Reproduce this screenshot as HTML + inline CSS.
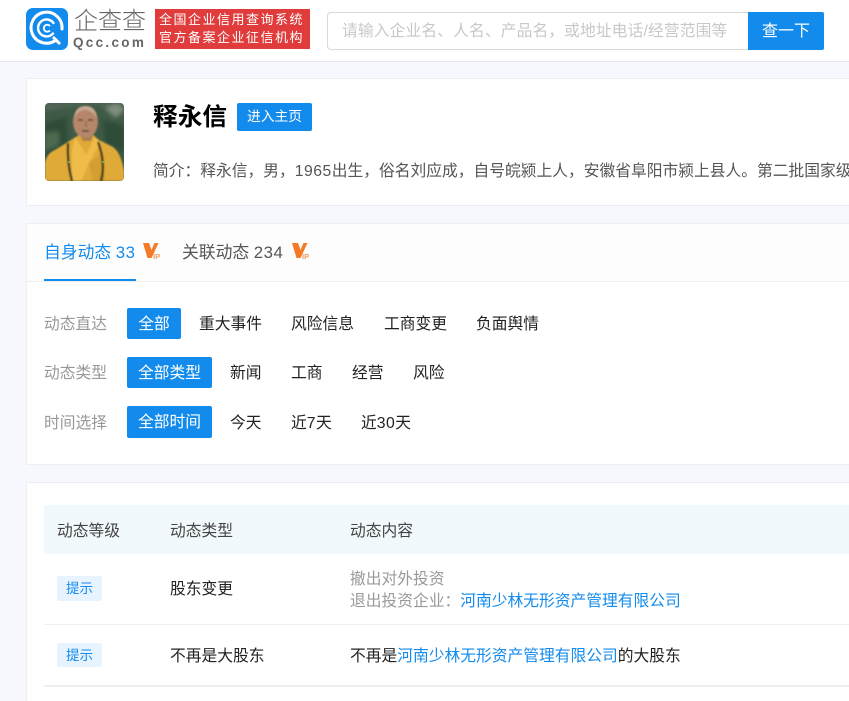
<!DOCTYPE html>
<html lang="zh-CN"><head><meta charset="utf-8"><title>释永信</title>
<style>
*{box-sizing:border-box;margin:0;padding:0}
html,body{width:849px;height:701px;overflow:hidden;background:#f6f8fd}
body{position:relative;font-family:"Liberation Sans","Noto Sans CJK SC",sans-serif;font-size:15.75px;color:#222}
.a{position:absolute;white-space:nowrap;line-height:22px}
.card{position:absolute;left:26px;width:823px;background:#fff;border:1px solid #eee;border-right:0}
.btn{position:absolute;background:#128bed;color:#fff;border-radius:2px;text-align:center;white-space:nowrap}
.g{color:#999}.b{color:#128bed}.k{color:#222}.d{color:#555}
.n{letter-spacing:.5px}
.tip{position:absolute;left:57px;width:45px;background:#e7f3ff;color:#128bed;font-size:13.5px;border-radius:2px;text-align:center}
</style></head><body>
<div style="position:absolute;left:0;top:0;width:849px;height:62px;background:#fff;border-bottom:1px solid #e6e7ee"></div>
<svg style="position:absolute;left:26px;top:8px" width="42" height="42" viewBox="0 0 42 42"><rect width="42" height="42" rx="7" fill="#128bed"/><path d="M30 32A15.500 15.500 0 1 1 36 21" fill="none" stroke="#fff" stroke-width="3" stroke-linecap="round"/><path d="M27 25.500A8.500 8.500 0 1 1 27.500 15" fill="none" stroke="#fff" stroke-width="2.400" stroke-linecap="round"/><path d="M24 22.500A3.500 3.500 0 1 1 24 18" fill="none" stroke="#fff" stroke-width="1.800"/><path d="M27 29l7 7" stroke="#fff" stroke-width="3"/></svg>
<div class="a" style="left:74px;top:4px;font-size:24px;line-height:36px;color:#666;font-weight:300">企查查</div>
<div class="a" style="left:73px;top:35px;font-size:13.5px;line-height:16px;letter-spacing:2.300px;color:#666;font-weight:bold">Qcc.com</div>
<div style="position:absolute;left:155px;top:9px;width:155px;height:40px;background:#e03c3c;color:#fff;font-size:13px;line-height:18px;padding:2px 0 0 4px;letter-spacing:1.500px;white-space:nowrap">全国企业信用查询系统<br>官方备案企业征信机构</div>
<div style="position:absolute;left:327px;top:12px;width:422px;height:38px;background:#fff;border:1px solid #d9d9d9;border-radius:4px 0 0 4px"></div>
<div class="a" style="left:342px;top:21px;color:#c8c8c8;letter-spacing:.12px">请输入企业名、人名、产品名，或地址电话/经营范围等</div>
<div class="btn" style="left:748px;top:12px;width:76px;height:38px;line-height:39px;font-size:16px;border-radius:0 2px 2px 0">查一下</div>

<div class="card" style="top:78px;height:128px"></div>
<svg style="position:absolute;left:45px;top:103px" width="79" height="78" viewBox="0 0 79 78">
<defs><clipPath id="c"><rect width="79" height="78" rx="4"/></clipPath><filter id="bl"><feGaussianBlur stdDeviation="2"/></filter><filter id="bs"><feGaussianBlur stdDeviation=".7"/></filter></defs>
<g clip-path="url(#c)"><rect width="79" height="78" fill="#3f5a46"/>
<g filter="url(#bl)"><path d="M0 0h79v10L50 2 20 4 0 8z" fill="#54685a"/><path d="M0 20l22-6v26L0 54zM58 16l21 8v26L60 40z" fill="#2f4c38"/><path d="M60 6l12-6 7 7-8 8z" fill="#7f8e7f"/><path d="M0 30l14-2v14L0 48z" fill="#4c6a50"/></g>
<g filter="url(#bs)"><path d="M0 78V60Q2 50 10 47L26 37 37 30 46 30 54 37 68 44Q76 50 79 68V78z" fill="#e0aa38"/><path d="M30 34L41 52 50 34 55 40 44 60 36 78H27V48z" fill="#efbc48"/><path d="M48 78L44 60 58 50 60 78z" fill="#d39e30"/><path d="M23 40Q22 60 27 78M53 39Q61 60 56 78" fill="none" stroke="#40381f" stroke-width="2.400"/><path d="M31 26L38 38 46 38 50 26z" fill="#a9804e"/><ellipse cx="40.500" cy="19" rx="12.500" ry="16" fill="#b5866a"/><path d="M29 15Q30 3 40.500 3T52 15Q47 7 40 7T29 15z" fill="#c8a991"/><path d="M33 17h5M43 17h5M37 28h7" stroke="#5a3f31" stroke-width="1.400"/><path d="M41 18v6" stroke="#96694f" stroke-width="1.500"/></g>
<circle cx="24" cy="59" r="1" fill="#5ec27a"/><circle cx="58" cy="59" r="1" fill="#5ec27a"/></g></svg>

<div class="a" style="left:153px;top:102px;font-size:24.7px;line-height:32px;font-weight:bold;color:#000">释永信</div>
<div class="btn" style="left:237px;top:103px;width:75px;height:28px;line-height:27px;font-size:13.75px">进入主页</div>
<div class="a d" style="left:153px;top:161px;width:696px;overflow:hidden">简介：释永信，男，<span class="n">1965</span>出生，俗名刘应成，自号皖颍上人，安徽省阜阳市颍上县人。第二批国家级</div>

<div class="card" style="top:223px;height:242px"></div>
<div style="position:absolute;left:27px;top:281px;width:822px;height:1px;background:#eee"></div>
<div style="position:absolute;left:27px;top:224px;width:822px;height:57px;background:#fdfdfe"></div>
<div class="a b" style="left:44px;top:242px;font-size:16.8px">自身动态 <span class="n">33</span></div>
<div style="position:absolute;left:44px;top:279px;width:92px;height:2px;background:#128bed"></div>
<svg style="position:absolute;left:143px;top:243px" width="17" height="17" viewBox="0 0 17 17"><path d="M0 0h6l2.500 7 3-7h4L8.500 15H4.500z" fill="#f47a25"/><text x="10" y="16" font-size="7.5" font-weight="bold" fill="#f29a5e" font-family="Liberation Sans">IP</text></svg>
<div class="a d" style="left:182px;top:242px;font-size:16.8px">关联动态 <span class="n">234</span></div>
<svg style="position:absolute;left:292px;top:243px" width="17" height="17" viewBox="0 0 17 17"><path d="M0 0h6l2.500 7 3-7h4L8.500 15H4.500z" fill="#f47a25"/><text x="10" y="16" font-size="7.5" font-weight="bold" fill="#f29a5e" font-family="Liberation Sans">IP</text></svg>

<div class="a g" style="left:44px;top:314px">动态直达</div>
<div class="btn" style="left:127px;top:308px;width:54px;height:31px;line-height:33px">全部</div>
<div class="a k" style="left:199px;top:314px">重大事件</div>
<div class="a k" style="left:291px;top:314px">风险信息</div>
<div class="a k" style="left:384px;top:314px">工商变更</div>
<div class="a k" style="left:476px;top:314px">负面舆情</div>

<div class="a g" style="left:44px;top:363px">动态类型</div>
<div class="btn" style="left:127px;top:357px;width:85px;height:31px;line-height:33px">全部类型</div>
<div class="a k" style="left:230px;top:363px">新闻</div>
<div class="a k" style="left:291px;top:363px">工商</div>
<div class="a k" style="left:352px;top:363px">经营</div>
<div class="a k" style="left:413px;top:363px">风险</div>

<div class="a g" style="left:44px;top:413px">时间选择</div>
<div class="btn" style="left:127px;top:406px;width:85px;height:32px;line-height:34px">全部时间</div>
<div class="a k" style="left:230px;top:413px">今天</div>
<div class="a k" style="left:291px;top:413px">近<span class="n">7</span>天</div>
<div class="a k" style="left:361px;top:413px">近<span class="n">30</span>天</div>

<div class="card" style="top:482px;height:219px;border-bottom:0"></div>
<div style="position:absolute;left:44px;top:505px;width:805px;height:49px;background:#f2f9fc"></div>
<div class="a" style="left:57px;top:521px;color:#444">动态等级</div>
<div class="a" style="left:170px;top:521px;color:#444">动态类型</div>
<div class="a" style="left:350px;top:521px;color:#444">动态内容</div>

<div class="tip" style="top:576px;height:25px;line-height:26px">提示</div>
<div class="a k" style="left:170px;top:579px">股东变更</div>
<div class="a g" style="left:350px;top:569px">撤出对外投资</div>
<div class="a g" style="left:350px;top:591px">退出投资企业：<span class="b">河南少林无形资产管理有限公司</span></div>
<div style="position:absolute;left:44px;top:624px;width:805px;height:1px;background:#eee"></div>

<div class="tip" style="top:643px;height:24px;line-height:25px">提示</div>
<div class="a k" style="left:170px;top:646px">不再是大股东</div>
<div class="a k" style="left:350px;top:646px">不再是<span class="b">河南少林无形资产管理有限公司</span>的大股东</div>
<div style="position:absolute;left:44px;top:685px;width:805px;height:2px;background:#eee"></div>
</body></html>
